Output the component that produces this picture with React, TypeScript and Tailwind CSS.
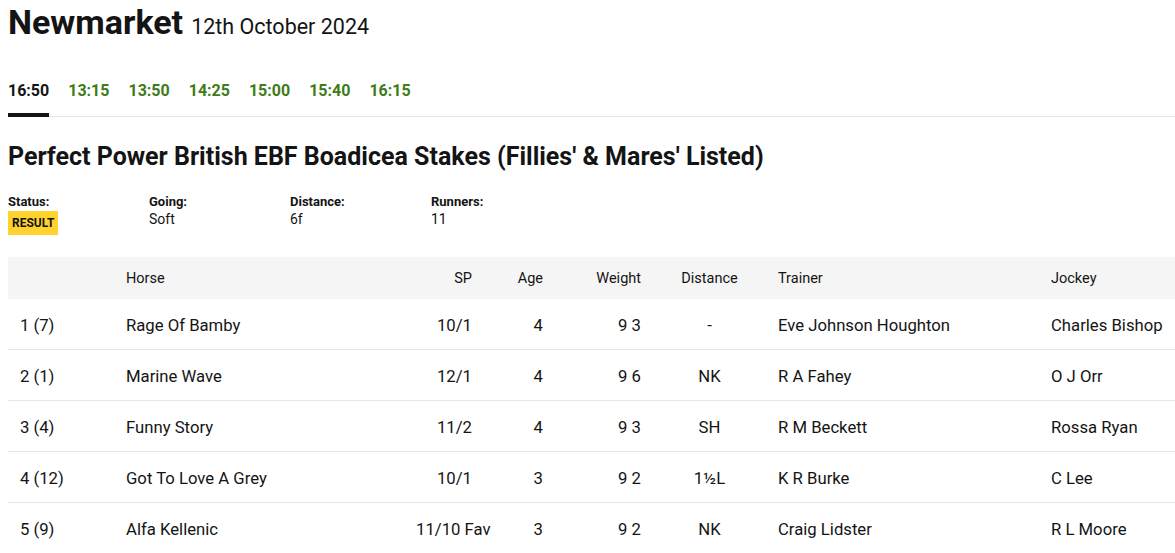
const times = ["16:50", "13:15", "13:50", "14:25", "15:00", "15:40", "16:15"];

const info = [
  { label: "Status:", value: null },
  { label: "Going:", value: "Soft" },
  { label: "Distance:", value: "6f" },
  { label: "Runners:", value: "11" },
];

const runners = [
  { pos: "1 (7)", horse: "Rage Of Bamby", sp: "10/1", age: "4", weight: "9 3", dist: "-", trainer: "Eve Johnson Houghton", jockey: "Charles Bishop" },
  { pos: "2 (1)", horse: "Marine Wave", sp: "12/1", age: "4", weight: "9 6", dist: "NK", trainer: "R A Fahey", jockey: "O J Orr" },
  { pos: "3 (4)", horse: "Funny Story", sp: "11/2", age: "4", weight: "9 3", dist: "SH", trainer: "R M Beckett", jockey: "Rossa Ryan" },
  { pos: "4 (12)", horse: "Got To Love A Grey", sp: "10/1", age: "3", weight: "9 2", dist: "1½L", trainer: "K R Burke", jockey: "C Lee" },
  { pos: "5 (9)", horse: "Alfa Kellenic", sp: "11/10 Fav", age: "3", weight: "9 2", dist: "NK", trainer: "Craig Lidster", jockey: "R L Moore" },
];

const cols = "grid grid-cols-[106px_290px_80px_71px_98px_113px_273px_1fr]";

export default function App() {
  return (
    <div className="min-h-screen bg-white pl-2 text-[#141414] font-['Roboto','Liberation_Sans',sans-serif]">
      <h1 className="flex items-baseline gap-2 pt-[2px]">
        <span className="text-[34px] font-bold leading-[40px]">Newmarket</span>
        <span className="text-[21.5px]">12th October 2024</span>
      </h1>

      <nav className="mt-[38px] flex gap-[19px] border-b border-[#e5e5e5]">
        {times.map((t, i) => (
          <a
            key={t}
            className={
              i === 0
                ? "-mb-px border-b-4 border-[#141414] pb-[12px] text-[16px] font-bold leading-5 text-[#141414]"
                : "pb-[12px] text-[16px] font-bold leading-5 text-[#3e7c17]"
            }
          >
            {t}
          </a>
        ))}
      </nav>

      <h2 className="mt-[25px] text-[25px] font-bold leading-[30px]">
        Perfect Power British EBF Boadicea Stakes (Fillies' &amp; Mares' Listed)
      </h2>

      <dl className="mt-[22px] grid w-[564px] grid-cols-4">
        {info.map((it) => (
          <div key={it.label}>
            <dt className="text-[13px] font-bold leading-4">{it.label}</dt>
            <dd className="text-[14px] leading-[18px]">
              {it.value ?? (
                <span className="mt-[1px] inline-block bg-[#ffd230] px-1 text-[12px] font-bold leading-6">
                  RESULT
                </span>
              )}
            </dd>
          </div>
        ))}
      </dl>

      <div className="mt-[22px] text-[16.7px]">
        <div className={`${cols} h-[42px] items-center bg-[#f5f5f5] pt-[2px] text-[14.5px]`}>
          <div className="px-3" />
          <div className="px-3">Horse</div>
          <div className="px-3 text-right">SP</div>
          <div className="px-3 text-right">Age</div>
          <div className="px-3 text-right">Weight</div>
          <div className="px-3 text-center">Distance</div>
          <div className="px-3">Trainer</div>
          <div className="px-3">Jockey</div>
        </div>
        {runners.map((r) => (
          <div key={r.pos} className={`${cols} h-[51px] items-center border-b border-[#e6e6e6] pt-[2px]`}>
            <div className="px-3">{r.pos}</div>
            <div className="px-3">{r.horse}</div>
            <div className="whitespace-nowrap px-3 text-right">{r.sp}</div>
            <div className="px-3 text-right">{r.age}</div>
            <div className="px-3 text-right">{r.weight}</div>
            <div className="px-3 text-center">{r.dist}</div>
            <div className="px-3">{r.trainer}</div>
            <div className="whitespace-nowrap px-3">{r.jockey}</div>
          </div>
        ))}
      </div>
    </div>
  );
}
